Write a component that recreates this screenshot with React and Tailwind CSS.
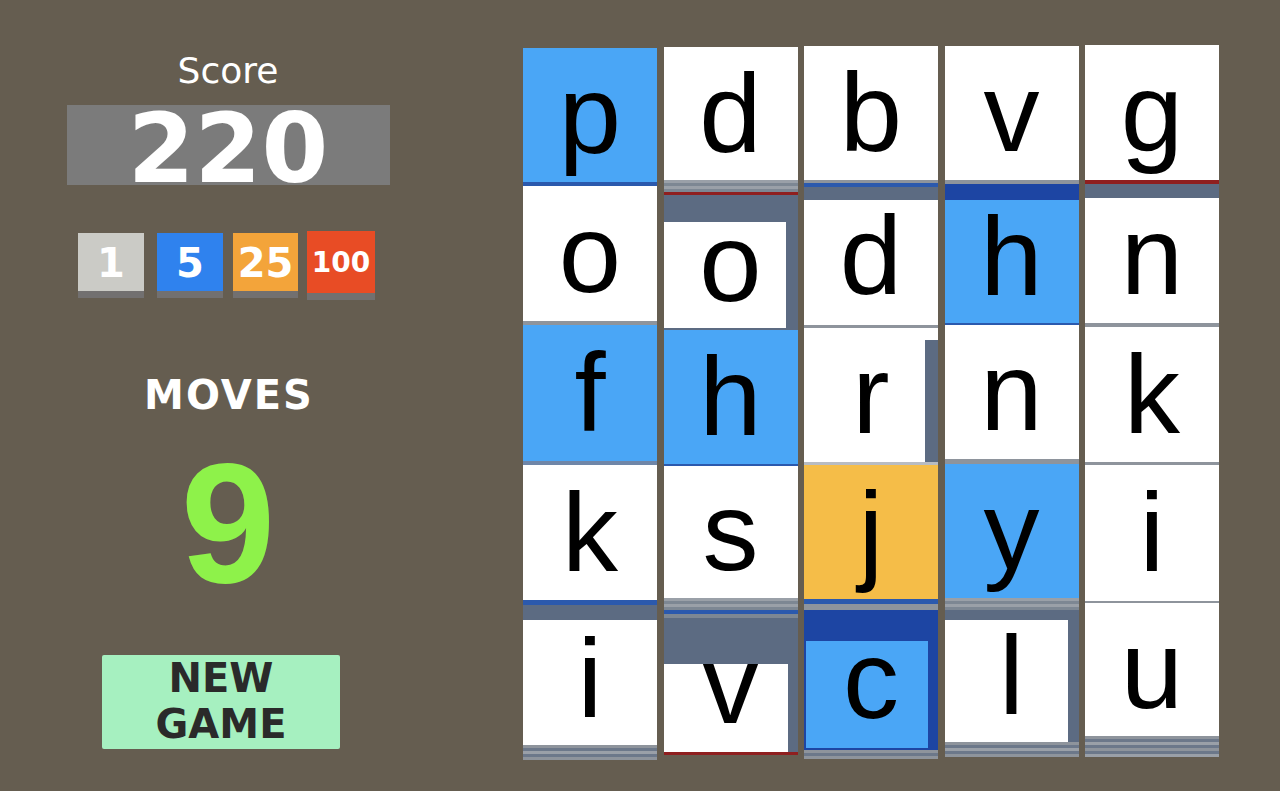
import React from "react";

const FONT = { fontFamily: '"Liberation Sans", Arial, sans-serif' };
const DJ = { fontFamily: '"DejaVu Sans", Verdana, sans-serif' };

const W = "bg-white";
const LB = "bg-[#4aa6f6]";
const DB = "bg-[#1d45a3]";
const SL = "bg-[#5c6b82]";
const GR = "bg-[#8e949c]";
const RD = "bg-[#8f1f1f]";
const BLN = "bg-[#2b59ad]";
const OR = "bg-[#f5bd48]";

const columns = [
  {
    mt: "mt-[48px]",
    segs: [
      { c: "h-[134px] " + LB, l: "p" },
      { c: "h-[4px] " + BLN },
      { c: "h-[135px] " + W, l: "o" },
      { c: "h-[4px] " + GR },
      { c: "h-[136px] " + LB, l: "f" },
      { c: "h-[4px] bg-[#6f86a8]" },
      { c: "h-[135px] " + W, l: "k" },
      { c: "h-[5px] " + BLN },
      {
        c: "h-[140px] " + SL,
        l: "i",
        lc: "pt-[8px]",
        ov: ["top-[15px] left-0 right-0 bottom-0 bg-white"],
      },
      { s: ["bg-[#8e949c]", "bg-[#6c788a]", "bg-[#9aa0a8]", "bg-[#6c788a]", "bg-[#8e949c]"] },
    ],
  },
  {
    mt: "mt-[47px]",
    segs: [
      { c: "h-[133px] " + W, l: "d" },
      { s: ["bg-[#9aa0a8]", "bg-[#7d8793]", "bg-[#9aa0a8]", "bg-[#7d8793]"] },
      { c: "h-[3px] " + RD },
      {
        c: "h-[135px] " + SL,
        l: "o",
        ov: ["top-[27px] left-0 right-[12px] bottom-[2px] bg-white"],
      },
      { c: "h-[134px] " + LB, l: "h" },
      { c: "h-[2px] " + BLN },
      { c: "h-[132px] " + W, l: "s" },
      { s: ["bg-[#9aa0a8]", "bg-[#7d8793]", "bg-[#9aa0a8]", "bg-[#7d8793]"] },
      { c: "h-[4px] " + BLN },
      { c: "h-[4px] bg-[#7d8793]" },
      {
        c: "h-[134px] " + SL,
        l: "v",
        ov: ["top-[46px] left-0 right-[10px] bottom-0 bg-white"],
      },
      { c: "h-[3px] " + RD },
    ],
  },
  {
    mt: "mt-[46px]",
    segs: [
      { c: "h-[134px] " + W, l: "b" },
      { c: "h-[3px] " + GR },
      { c: "h-[4px] " + BLN },
      {
        c: "h-[138px] " + SL,
        l: "d",
        ov: ["top-[13px] left-0 right-0 bottom-0 bg-white"],
      },
      { c: "h-[3px] " + GR },
      {
        c: "h-[134px] " + W,
        l: "r",
        ov: ["top-[12px] right-0 w-[13px] bottom-0 bg-[#5c6b82]"],
      },
      { c: "h-[3px] bg-[#b8bcc2]" },
      { c: "h-[134px] " + OR, l: "j" },
      { c: "h-[5px] " + BLN },
      { c: "h-[6px] " + GR },
      {
        c: "h-[140px] " + DB,
        l: "c",
        ov: ["top-[31px] left-[2px] right-[10px] bottom-[2px] bg-[#4aa6f6]"],
      },
      { s: ["bg-[#8e949c]", "bg-[#6c788a]", "bg-[#8e949c]"] },
    ],
  },
  {
    mt: "mt-[46px]",
    segs: [
      { c: "h-[134px] " + W, l: "v" },
      { c: "h-[4px] " + GR },
      {
        c: "h-[139px] " + DB,
        l: "h",
        lc: "pt-[6px]",
        ov: ["top-[16px] left-0 right-0 bottom-0 bg-[#4aa6f6]"],
      },
      { c: "h-[2px] " + BLN },
      { c: "h-[134px] " + W, l: "n" },
      { c: "h-[5px] " + GR },
      { c: "h-[134px] " + LB, l: "y" },
      { s: ["bg-[#9aa0a8]", "bg-[#7d8793]", "bg-[#9aa0a8]", "bg-[#7d8793]"] },
      {
        c: "h-[132px] " + SL,
        l: "l",
        ov: ["top-[10px] left-0 right-[11px] bottom-0 bg-white"],
      },
      { s: ["bg-[#8e949c]", "bg-[#6c788a]", "bg-[#9aa0a8]", "bg-[#6c788a]", "bg-[#8e949c]"] },
    ],
  },
  {
    mt: "mt-[45px]",
    segs: [
      { c: "h-[135px] " + W, l: "g" },
      { c: "h-[4px] " + RD },
      {
        c: "h-[139px] " + SL,
        l: "n",
        lc: "pt-[4px]",
        ov: ["top-[14px] left-0 right-0 bottom-0 bg-white"],
      },
      { c: "h-[4px] " + GR },
      { c: "h-[135px] " + W, l: "k" },
      { c: "h-[3px] " + GR },
      { c: "h-[136px] " + W, l: "i" },
      { c: "h-[2px] " + GR },
      { c: "h-[133px] " + W, l: "u" },
      {
        s: [
          "bg-[#8e949c]",
          "bg-[#6c788a]",
          "bg-[#9aa0a8]",
          "bg-[#6c788a]",
          "bg-[#8e949c]",
          "bg-[#6c788a]",
          "bg-[#9aa0a8]",
        ],
      },
    ],
  },
];

function Segment({ seg }) {
  if (seg.s) {
    return (
      <div className="flex flex-col">
        {seg.s.map((c, i) => (
          <div key={i} className={"h-[3px] " + c} />
        ))}
      </div>
    );
  }
  if (!seg.l) return <div className={seg.c} />;
  return (
    <div className={"relative " + seg.c}>
      {(seg.ov || []).map((o, i) => (
        <div key={i} className={"absolute " + o} />
      ))}
      <div
        className={
          "absolute inset-0 flex items-center justify-center text-[112px] leading-none text-black " +
          (seg.lc || "")
        }
        style={FONT}
      >
        <span>{seg.l}</span>
      </div>
    </div>
  );
}

function Coin({ bg, text, size, h, mt }) {
  return (
    <div className={"flex flex-col " + mt}>
      <div
        className={
          "flex items-center justify-center font-bold text-white leading-none " + bg + " " + h + " " + size
        }
        style={DJ}
      >
        <span className="pt-[2px]">{text}</span>
      </div>
      <div className="h-[7px] bg-[#727070]" />
    </div>
  );
}

export default function App() {
  return (
    <div className="w-[1280px] h-[791px] bg-[#655d50] flex overflow-hidden" style={FONT}>
      {/* Left panel */}
      <div className="w-[456px] flex flex-col items-center" style={DJ}>
        <div className="mt-[53px] text-[36px] leading-none text-white">Score</div>
        <div className="mt-[16px] w-[323px] h-[80px] bg-[#7b7b7b] flex items-center justify-center">
          <span className="mt-[8px] text-[96px] leading-none font-bold text-white">220</span>
        </div>
        <div className="self-start ml-[78px] mt-[46px] flex items-start">
          <div className="w-[66px]">
            <Coin bg="bg-[#cbcbc6]" text="1" size="text-[40px]" h="h-[58px]" mt="mt-[2px]" />
          </div>
          <div className="w-[66px] ml-[13px]">
            <Coin bg="bg-[#2f82ee]" text="5" size="text-[40px]" h="h-[58px]" mt="mt-[2px]" />
          </div>
          <div className="w-[65px] ml-[10px]">
            <Coin bg="bg-[#f3a43a]" text="25" size="text-[40px]" h="h-[58px]" mt="mt-[2px]" />
          </div>
          <div className="w-[68px] ml-[9px]">
            <Coin bg="bg-[#e84c25]" text="100" size="text-[28px]" h="h-[62px]" mt="mt-0" />
          </div>
        </div>
        <div className="mt-[75px] pl-[2px] text-[40px] leading-none font-bold text-white tracking-[2px]">
          MOVES
        </div>
        <div className="mt-[23px] text-[170px] leading-none font-bold text-[#8ef24a]" style={FONT}>
          9
        </div>
        <div className="self-start ml-[102px] mt-[47px] w-[238px] h-[94px] rounded-[2px] bg-[#a6f0c0] flex flex-col items-center text-[40px] leading-[46px] font-bold text-[#2a2a2a]">
          <span>NEW</span>
          <span>GAME</span>
        </div>
      </div>

      {/* Board */}
      <div className="ml-[67px] flex items-start gap-[6.5px]">
        {columns.map((col, i) => (
          <div key={i} className={"w-[134px] flex flex-col " + col.mt}>
            {col.segs.map((s, j) => (
              <Segment key={j} seg={s} />
            ))}
          </div>
        ))}
      </div>
    </div>
  );
}
